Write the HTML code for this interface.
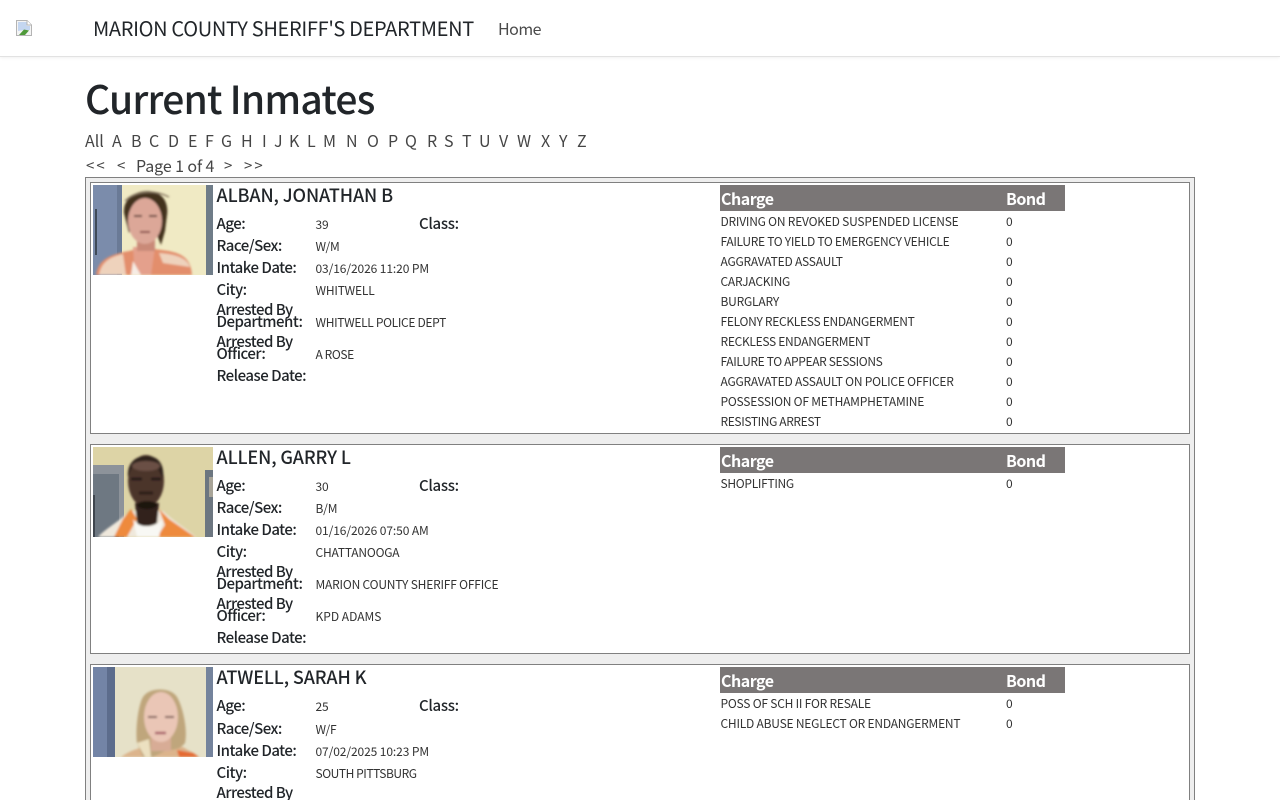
<!DOCTYPE html>
<html lang="en">
<head>
<meta charset="utf-8">
<title>Current Inmates</title>
<style>
html,body{margin:0;padding:0;width:1280px;height:800px;overflow:hidden;background:#fff}
body{position:relative;font-family:"Noto Sans CJK JP","Liberation Sans",sans-serif;color:#212529}
.t,a{position:absolute;white-space:nowrap;line-height:20px;height:20px;text-decoration:none}
nav{position:absolute;left:0;top:0;width:1280px;height:56px;background:#fff;border-bottom:1px solid #e2e2e2;box-shadow:0 1px 3px rgba(0,0,0,.06)}
.brand{left:93px;top:18px;font-size:20px;color:#212529;letter-spacing:-.33px}
.home{left:498px;top:18px;font-size:16px;color:#4a4a4a;letter-spacing:-.5px}
h1{position:absolute;left:85px;top:73px;margin:0;font-size:39px;line-height:50px;font-weight:500;white-space:nowrap;letter-spacing:-.8px}
.al a{top:130px;font-size:16px;color:#454545}
.pg a,.pg span{top:155px;font-size:16px;color:#454545}
.pg a{font-size:15px;letter-spacing:2px;margin-top:1px}
.pg span{letter-spacing:-.1px}
#outer{position:absolute;left:85px;top:177px;width:1108px;height:700px;border:1px solid #808080;background:#eee}
.card{position:absolute;left:90px;width:1098px;border:1px solid #808080;background:#fff}
.ph{position:absolute;left:93px;width:120px;height:90px;display:block}
.name{left:216.500px;font-size:18px;font-weight:500;letter-spacing:-.12px}
.l{left:216.500px;font-size:15px;font-weight:500;color:#212529;letter-spacing:-.5px;margin-top:1px}
.v{left:315.500px;font-size:12px;color:#333;letter-spacing:-.2px;margin-top:1px}
.c{left:419px;font-size:15px;font-weight:500;letter-spacing:-.3px;margin-top:1px}
.hd{position:absolute;left:720px;width:345px;height:26px;background:#7a7676}
.hh{font-size:16px;font-weight:700;color:#fff;letter-spacing:-.5px}
.r{left:720.500px;font-size:12px;color:#333;letter-spacing:-.22px;margin-top:1px}
.rn{letter-spacing:-.3px}
.b{left:1006px;font-size:12px;color:#333;margin-top:1px}
</style>
</head>
<body>
<nav></nav>
<svg style="position:absolute;left:16px;top:20px" width="16" height="16" viewBox="0 0 16 16">
<path d="M.5.5H11L15.500 5V15.500H.5Z" fill="#f4f4f4" stroke="#b4b4b4"/>
<path d="M2 2H10.500V6H14V10L8 10 2 11Z" fill="#c4d6f0"/>
<path d="M3 15L8 9.500 13 10.500 9 15Z" fill="#4f9a3a"/>
<path d="M11 .5V5H15.500" fill="#fff" stroke="#b4b4b4"/>
</svg>
<div class="t brand">MARION COUNTY SHERIFF'S DEPARTMENT</div>
<a class="home" href="#">Home</a>
<h1>Current Inmates</h1>
<div class="al">
<a style="left:85px" href="#">All</a><a style="left:112px" href="#">A</a><a style="left:131px" href="#">B</a><a style="left:149px" href="#">C</a><a style="left:168px" href="#">D</a><a style="left:188px" href="#">E</a><a style="left:205px" href="#">F</a><a style="left:221px" href="#">G</a><a style="left:241px" href="#">H</a><a style="left:262px" href="#">I</a><a style="left:274px" href="#">J</a><a style="left:289px" href="#">K</a><a style="left:307px" href="#">L</a><a style="left:323px" href="#">M</a><a style="left:346px" href="#">N</a><a style="left:367px" href="#">O</a><a style="left:388px" href="#">P</a><a style="left:405px" href="#">Q</a><a style="left:427px" href="#">R</a><a style="left:444px" href="#">S</a><a style="left:462px" href="#">T</a><a style="left:479px" href="#">U</a><a style="left:499px" href="#">V</a><a style="left:517px" href="#">W</a><a style="left:541px" href="#">X</a><a style="left:559px" href="#">Y</a><a style="left:577px" href="#">Z</a>
</div>
<div class="pg">
<a style="left:86px" href="#">&lt;&lt;</a><a style="left:117px" href="#">&lt;</a><span class="t" style="left:136px">Page 1 of 4</span><a style="left:224px" href="#">&gt;</a><a style="left:244px" href="#">&gt;&gt;</a>
</div>
<div id="outer"></div>

<svg width="0" height="0" style="position:absolute"><defs>
<filter id="bl" x="-10%" y="-10%" width="120%" height="120%"><feGaussianBlur stdDeviation="1"/></filter>
</defs></svg>

<!-- Card 1 -->
<div class="card" style="top:182px;height:250px"></div>
<svg class="ph" style="top:185px" viewBox="0 0 120 90">
<rect width="120" height="90" fill="#f0eac4"/>
<rect x="0" y="0" width="28" height="90" fill="#7b8cab"/>
<rect x="24" y="0" width="5" height="90" fill="#6a7a96"/>
<rect x="2" y="24" width="2" height="46" fill="#3f4a58"/>
<rect x="113" y="0" width="7" height="90" fill="#6f7c88"/>
<g filter="url(#bl)">
<path d="M3 90C5 76 14 70 36 66L44 64H62L76 66C90 69 98 74 99 90Z" fill="#e38e6c"/>
<path d="M6 90C8 78 16 72 30 69L33 90ZM66 68C80 69 94 72 97 82L70 78Z" fill="#eed2bc"/>
<path d="M40 62H62L58 90H42Z" fill="#e4a08c"/>
<path d="M40 76L48 90H38Z" fill="#f6ece4"/>
<path d="M31 28C30 14 42 6 54 6 68 6 76 16 74 30L72 46 68 60 60 40H40L36 48Z" fill="#43331f"/>
<path d="M32 16C42 6 60 4 76 12" stroke="#8a7a64" stroke-width="1.500" fill="none"/>
<rect x="44" y="48" width="18" height="18" fill="#c98a78"/>
<ellipse cx="52" cy="36" rx="17" ry="23" fill="#dca798"/>
<path d="M41 31h8M56 31h8" stroke="#6a4a40" stroke-width="2"/>
<path d="M47 47h10" stroke="#8a4e48" stroke-width="2"/>
</g>
</svg>
<div class="t name" style="top:185px">ALBAN, JONATHAN B</div>
<div class="t l" style="top:213px">Age:</div><div class="t v" style="top:214px">39</div><div class="t c" style="top:213px">Class:</div>
<div class="t l" style="top:235px">Race/Sex:</div><div class="t v" style="top:236px">W/M</div>
<div class="t l" style="top:257px">Intake Date:</div><div class="t v" style="top:258px;letter-spacing:-.1px">03/16/2026 11:20 PM</div>
<div class="t l" style="top:279px">City:</div><div class="t v" style="top:280px">WHITWELL</div>
<div class="t l" style="top:299px">Arrested By</div><div class="t l" style="top:311px">Department:</div><div class="t v" style="top:312px;letter-spacing:-.33px">WHITWELL POLICE DEPT</div>
<div class="t l" style="top:331px">Arrested By</div><div class="t l" style="top:343px">Officer:</div><div class="t v" style="top:344px;letter-spacing:-.4px">A ROSE</div>
<div class="t l" style="top:365px">Release Date:</div>
<div class="hd" style="top:185px"></div>
<div class="t hh" style="left:721px;top:188px">Charge</div><div class="t hh" style="left:1006px;top:188px">Bond</div>
<div class="t r" style="top:211px">DRIVING ON REVOKED SUSPENDED LICENSE</div><div class="t b" style="top:211px">0</div>
<div class="t r rn" style="top:231px">FAILURE TO YIELD TO EMERGENCY VEHICLE</div><div class="t b" style="top:231px">0</div>
<div class="t r" style="top:251px">AGGRAVATED ASSAULT</div><div class="t b" style="top:251px">0</div>
<div class="t r" style="top:271px">CARJACKING</div><div class="t b" style="top:271px">0</div>
<div class="t r" style="top:291px">BURGLARY</div><div class="t b" style="top:291px">0</div>
<div class="t r rn" style="top:311px">FELONY RECKLESS ENDANGERMENT</div><div class="t b" style="top:311px">0</div>
<div class="t r rn" style="top:331px">RECKLESS ENDANGERMENT</div><div class="t b" style="top:331px">0</div>
<div class="t r" style="top:351px;letter-spacing:-.36px">FAILURE TO APPEAR SESSIONS</div><div class="t b" style="top:351px">0</div>
<div class="t r" style="top:371px">AGGRAVATED ASSAULT ON POLICE OFFICER</div><div class="t b" style="top:371px">0</div>
<div class="t r" style="top:391px">POSSESSION OF METHAMPHETAMINE</div><div class="t b" style="top:391px">0</div>
<div class="t r" style="top:411px;letter-spacing:-.38px">RESISTING ARREST</div><div class="t b" style="top:411px">0</div>

<!-- Card 2 -->
<div class="card" style="top:444px;height:208px"></div>
<svg class="ph" style="top:447px" viewBox="0 0 120 90">
<rect width="120" height="90" fill="#ddd4a6"/>
<rect x="0" y="18" width="31" height="72" fill="#8d939a"/>
<rect x="0" y="27" width="26" height="63" fill="#6e7882"/>
<rect x="0" y="48" width="2" height="42" fill="#3f464e"/>
<rect x="112" y="23" width="8" height="67" fill="#6c7680"/>
<rect x="116" y="30" width="4" height="20" fill="#a8a498"/>
<g filter="url(#bl)">
<path d="M5 90C12 82 24 76 37 64L70 64C80 74 94 82 103 90Z" fill="#efe8dc"/>
<path d="M21 90L30 72 38 62 44 72 34 90ZM66 62L76 72 102 90H64L72 78Z" fill="#ee8a3d"/>
<path d="M40 72C46 82 62 82 70 72L66 90H44Z" fill="#f8f8f4"/>
<path d="M42 56H66L64 76C58 80 48 80 44 76Z" fill="#33241d"/>
<ellipse cx="53" cy="34" rx="18" ry="26" fill="#4c342a"/>
<path d="M35 30C34 14 44 9 54 9 64 9 72 16 70 32L64 20C56 16 44 16 38 22Z" fill="#2f221c"/>
<ellipse cx="53" cy="19" rx="14" ry="5" fill="#6a5044"/>
<path d="M38 32h11M58 32h10" stroke="#1e1412" stroke-width="2.500"/>
<path d="M46 46h14" stroke="#2a1a16" stroke-width="3"/>
<ellipse cx="54" cy="58" rx="10" ry="4" fill="#1c1411"/>
</g>
</svg>
<div class="t name" style="top:447px">ALLEN, GARRY L</div>
<div class="t l" style="top:475px">Age:</div><div class="t v" style="top:476px">30</div><div class="t c" style="top:475px">Class:</div>
<div class="t l" style="top:497px">Race/Sex:</div><div class="t v" style="top:498px">B/M</div>
<div class="t l" style="top:519px">Intake Date:</div><div class="t v" style="top:520px;letter-spacing:-.1px">01/16/2026 07:50 AM</div>
<div class="t l" style="top:541px">City:</div><div class="t v" style="top:542px">CHATTANOOGA</div>
<div class="t l" style="top:561px">Arrested By</div><div class="t l" style="top:573px">Department:</div><div class="t v" style="top:574px">MARION COUNTY SHERIFF OFFICE</div>
<div class="t l" style="top:593px">Arrested By</div><div class="t l" style="top:605px">Officer:</div><div class="t v" style="top:606px;letter-spacing:0">KPD ADAMS</div>
<div class="t l" style="top:627px">Release Date:</div>
<div class="hd" style="top:447px"></div>
<div class="t hh" style="left:721px;top:450px">Charge</div><div class="t hh" style="left:1006px;top:450px">Bond</div>
<div class="t r rn" style="top:473px">SHOPLIFTING</div><div class="t b" style="top:473px">0</div>

<!-- Card 3 -->
<div class="card" style="top:664px;height:200px"></div>
<svg class="ph" style="top:667px" viewBox="0 0 120 90">
<rect width="120" height="90" fill="#e6e1c8"/>
<rect x="0" y="0" width="22" height="90" fill="#7384a6"/>
<rect x="14" y="0" width="8" height="90" fill="#5c6c8c"/>
<rect x="113" y="0" width="7" height="90" fill="#74839c"/>
<g filter="url(#bl)">
<path d="M28 90C36 84 44 82 50 80L90 80C96 84 102 86 106 90Z" fill="#dcb48c"/>
<path d="M84 83L100 86 106 90H86Z" fill="#e46a30"/>
<path d="M44 76C42 60 46 36 50 30 56 20 78 20 84 30 90 40 95 64 92 76 86 84 78 82 72 84L60 90H50Z" fill="#bfa67c"/>
<path d="M44 76L52 90H58L56 72Z" fill="#ece0c0"/>
<rect x="58" y="68" width="20" height="16" fill="#d8ac96"/>
<ellipse cx="68" cy="50" rx="17" ry="25" fill="#eac6b6"/>
<path d="M55 50h9M72 50h9" stroke="#80605a" stroke-width="2"/>
<path d="M62 66h11" stroke="#a8606a" stroke-width="2.500"/>
</g>
</svg>
<div class="t name" style="top:667px">ATWELL, SARAH K</div>
<div class="t l" style="top:695px">Age:</div><div class="t v" style="top:696px">25</div><div class="t c" style="top:695px">Class:</div>
<div class="t l" style="top:718px">Race/Sex:</div><div class="t v" style="top:719px">W/F</div>
<div class="t l" style="top:740px">Intake Date:</div><div class="t v" style="top:741px;letter-spacing:-.1px">07/02/2025 10:23 PM</div>
<div class="t l" style="top:762px">City:</div><div class="t v" style="top:763px;letter-spacing:-.45px">SOUTH PITTSBURG</div>
<div class="t l" style="top:782px">Arrested By</div>
<div class="hd" style="top:667px"></div>
<div class="t hh" style="left:721px;top:670px">Charge</div><div class="t hh" style="left:1006px;top:670px">Bond</div>
<div class="t r" style="top:693px">POSS OF SCH II FOR RESALE</div><div class="t b" style="top:693px">0</div>
<div class="t r" style="top:713px">CHILD ABUSE NEGLECT OR ENDANGERMENT</div><div class="t b" style="top:713px">0</div>
</body>
</html>
